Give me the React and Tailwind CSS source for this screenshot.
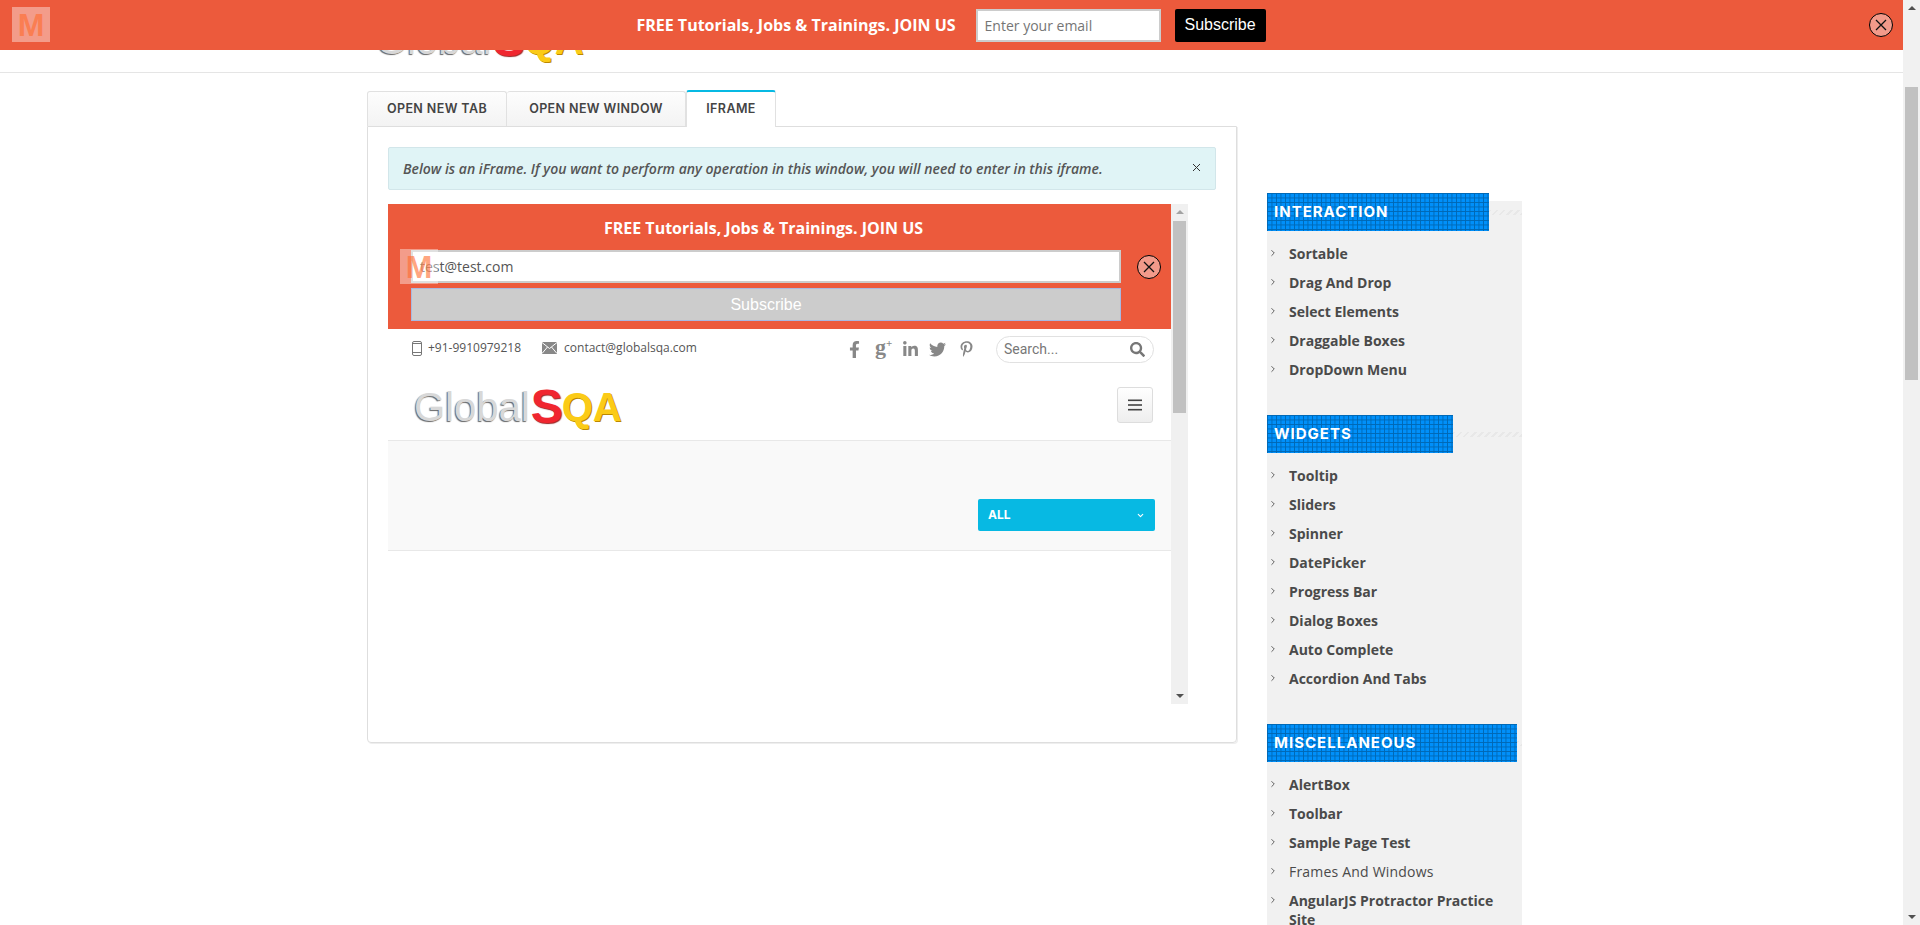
import React from "react";
import { FaFacebookF, FaLinkedinIn, FaTwitter, FaPinterestP, FaSearch } from "react-icons/fa";
import { ChevronRight, ChevronDown } from "lucide-react";

const M = ({ className = "" }) => (
  <div className={`flex items-center justify-center bg-[#ffffff66] w-[38px] h-[35px] text-[#ff6a2c99] font-bold text-[32px] leading-none font-['Liberation_Sans',sans-serif] ${className}`}>M</div>
);

const CloseCircle = ({ className = "" }) => (
  <div className={`w-6 h-6 rounded-full bg-[#f29a8a] border-[1.5px] border-black flex items-center justify-center ${className}`}>
    <svg width="14" height="14" viewBox="0 0 14 14"><path d="M2 2 L12 12 M12 2 L2 12" stroke="#111" strokeWidth="1.3" fill="none" /></svg>
  </div>
);

const Logo = () => (
  <div className="flex items-center h-[37px] font-['Liberation_Sans',sans-serif] leading-none select-none">
    <span className="text-[40px] text-[#d8d8d8] [text-shadow:-1px_1px_1px_#666]">Global</span>
    <span className="text-[48px] font-bold text-[#f0262f] ml-[1px] [text-shadow:1px_1px_1px_#922]">S</span>
    <span className="text-[40px] font-bold text-[#fbcb17] -ml-[1px] [text-shadow:1px_1px_0_#b80]">QA</span>
  </div>
);

const Section = ({ title, width, items, mt }) => (
  <div className={mt}>
    <div className="flex items-center relative">
      <div
        className="h-[38px] flex items-center pl-[7px] text-white font-bold text-[15px] tracking-[1px] font-['Inter',sans-serif] bg-[#0090fa] bg-[linear-gradient(#0068b4_1px,transparent_1px),linear-gradient(90deg,#0068b4_1px,transparent_1px)] bg-[size:4.5px_4.5px]"
        style={{ width }}
      >
        {title}
      </div>
      <div className="flex-1 h-[5px] bg-[repeating-linear-gradient(135deg,#e8e8e8_0_2px,#f1f1f1_2px_5px)]" />
    </div>
    <ul className="mt-[8px] mb-[1px] flex flex-col">
      {items.map((t) => (
        <li key={t} className="flex items-start min-h-[29px] pl-[1px]">
          <ChevronRight className="w-[10px] h-[10px] text-[#444] mt-[9px] shrink-0" strokeWidth={2} />
          <span className={`ml-[11px] py-[5px] text-[14px] leading-[19px] text-[#4a4a4a] font-['Open_Sans',sans-serif] pr-[8px] ${t === "Frames And Windows" ? "font-normal tracking-[0.2px]" : "font-bold"}`}>{t}</span>
        </li>
      ))}
    </ul>
  </div>
);

const tabText = "text-[12.5px] font-semibold tracking-[0.4px] text-[#444] font-['Inter',sans-serif]";

export default function App() {
  return (
    <div className="relative flex h-[925px] w-full overflow-hidden bg-white font-['Open_Sans',sans-serif]">
      <div className="flex-1 min-w-0 relative">
        {/* fixed promo bar */}
        <div className="absolute top-0 left-0 right-0 h-[50px] bg-[#ec5a3c] z-10 flex items-center justify-center">
          <M className="absolute left-[12px] top-[7px]" />
          <div className="flex items-center pr-[1px]">
            <span className="text-white font-bold text-[16px]">FREE Tutorials, Jobs &amp; Trainings. JOIN US</span>
            <div className="ml-[20px] w-[185px] h-[33px] bg-white border-2 border-[#ccc] flex items-center pl-[7px] text-[14px] text-[#757575]">Enter your email</div>
            <div className="ml-[14px] w-[91px] h-[33px] bg-black rounded-[2px] text-white flex items-center justify-center text-[16px] font-['Liberation_Sans',sans-serif]">Subscribe</div>
          </div>
          <CloseCircle className="absolute right-[10px] top-[13px]" />
        </div>

        {/* sticky header remains */}
        <div className="h-[73px] border-b border-[#e5e5e5] overflow-hidden pl-[376px] pt-[21px]">
          <Logo />
        </div>

        <div className="flex pl-[367px] pt-[17px]">
          {/* main column */}
          <div className="w-[870px]">
            <div className={`flex h-[36px] items-end relative z-[1] ${tabText}`}>
              <div className="w-[140px] h-[35px] border border-[#e1e1e1] border-b-0 rounded-t-[3px] bg-[linear-gradient(#fdfdfd,#f3f3f3)] flex items-center justify-center">OPEN NEW TAB</div>
              <div className="w-[179px] h-[35px] border border-l-0 border-[#e1e1e1] border-b-0 rounded-t-[3px] bg-[linear-gradient(#fdfdfd,#f3f3f3)] flex items-center justify-center">OPEN NEW WINDOW</div>
              <div className="w-[90px] h-[37px] -mb-px border-x border-[#e1e1e1] border-t-2 border-t-[#07b9e3] rounded-t-[3px] bg-white flex items-center justify-center">IFRAME</div>
            </div>
            <div className="h-[617px] border border-[#dedede] shadow-[1px_1px_0_#eeeeee] rounded-b-[4px] pl-[20px] pr-[20px] pt-[20px]">
              <div className="h-[43px] bg-[#e0f4f6] border border-[#d2e6ea] rounded-[2px] flex items-center justify-between pl-[14px] pr-[14px] text-[14px] italic font-semibold text-[#555]">
                <span>Below is an iFrame. If you want to perform any operation in this window, you will need to enter in this iframe.</span>
                <svg className="mb-[2px]" width="9" height="9" viewBox="0 0 9 9"><path d="M1 1 L8 8 M8 1 L1 8" stroke="#333" strokeWidth="1" /></svg>
              </div>
              {/* iframe */}
              <div className="mt-[14px] w-[800px] h-[500px] flex overflow-hidden">
                <div className="flex-1 min-w-0 flex flex-col">
                  <div className="h-[125px] bg-[#ec5a3c] relative pt-[12px] shrink-0">
                    <div className="text-center pr-[32px] text-white font-bold text-[16px] leading-[24px]">FREE Tutorials, Jobs &amp; Trainings. JOIN US</div>
                    <div className="ml-[23px] mt-[10px] w-[710px] h-[33px] bg-white border-2 border-[#ccc] flex items-center pl-[7px] text-[14px] text-[#555]">test@test.com</div>
                    <div className="ml-[23px] mt-[5px] w-[710px] h-[33px] bg-[#ccc] border border-[#a9b8e0] flex items-center justify-center text-white text-[16px] font-['Liberation_Sans',sans-serif]">Subscribe</div>
                    <M className="absolute left-[12px] top-[45px]" />
                    <CloseCircle className="absolute left-[749px] top-[51px]" />
                  </div>
                  <div className="h-[47px] shrink-0 flex items-start pl-[24px] pr-[17px] pt-[7px] relative">
                    <div className="flex items-center text-[12px] text-[#555] mt-[3px]">
                      <svg width="10" height="15" viewBox="0 0 10 15" fill="none" stroke="#777" strokeWidth="1">
                        <rect x="0.5" y="0.5" width="9" height="14" rx="1.5" />
                        <path d="M0.5 11.5 H9.5 M0.5 2.5 H9.5" />
                      </svg>
                      <span className="ml-[6px]">+91-9910979218</span>
                      <svg className="ml-[21px]" width="15" height="12" viewBox="0 0 15 12">
                        <rect x="0" y="0" width="15" height="12" fill="#888" />
                        <path d="M0 0.5 L7.5 6.5 L15 0.5 M0 11.5 L5.5 5 M15 11.5 L9.5 5" stroke="#fff" strokeWidth="1" fill="none" />
                      </svg>
                      <span className="ml-[7px]">contact@globalsqa.com</span>
                    </div>
                    <div className="ml-auto flex items-center text-[#888] mt-[4px]">
                      <FaFacebookF className="w-[11px] h-[17px]" />
                      <span className="ml-[15px] w-[15px] h-[18px] relative font-['Liberation_Serif',serif] font-bold text-[22px] leading-[14px] text-left">
                        g<span className="absolute left-[11px] -top-[2px] text-[11px] leading-[11px]">+</span>
                      </span>
                      <FaLinkedinIn className="ml-[12px] w-[17px] h-[17px]" />
                      <FaTwitter className="ml-[10px] w-[17px] h-[17px]" />
                      <FaPinterestP className="ml-[14px] w-[13px] h-[16px]" />
                    </div>
                    <div className="ml-[23px] w-[158px] h-[27px] border border-[#e1e1e1] rounded-full flex items-center justify-between pl-[7px] pr-[8px] text-[14px] text-[#777] font-['Roboto',sans-serif]">
                      <span>Search...</span>
                      <FaSearch className="w-[15px] h-[15px] text-[#777]" />
                    </div>
                  </div>
                  <div className="h-[65px] shrink-0 border-b border-[#e8e8e8] flex items-start pl-[26px] pr-[18px] relative">
                    <div className="mt-[12px]"><Logo /></div>
                    <div className="ml-auto mt-[11px] w-[36px] h-[36px] border border-[#ddd] rounded-[3px] bg-[linear-gradient(#fff,#eee)] flex items-center justify-center">
                      <svg width="14" height="12" viewBox="0 0 14 12" fill="#444">
                        <rect y="0.5" width="14" height="1.6" />
                        <rect y="5.2" width="14" height="1.6" />
                        <rect y="9.9" width="14" height="1.6" />
                      </svg>
                    </div>
                  </div>
                  <div className="h-[110px] shrink-0 bg-[#f9f9f9] border-b border-[#e8e8e8] flex items-start justify-end pr-[16px] pt-[58px]">
                    <div className="w-[177px] h-[32px] rounded-[2px] bg-[#07b9e3] flex items-center justify-between pl-[10px] pr-[10px] text-white font-bold text-[12px] font-['Inter',sans-serif]">
                      <span>ALL</span>
                      <ChevronDown className="w-[9px] h-[9px]" strokeWidth={3} />
                    </div>
                  </div>
                </div>
                {/* iframe scrollbar */}
                <div className="w-[17px] bg-[#f0f0f0] flex flex-col items-center shrink-0 pt-[6px] pb-[6px]">
                  <div className="w-0 h-0 border-x-[4px] border-x-transparent border-b-[4px] border-b-[#a3a3a3]" />
                  <div className="mt-[7px] w-[13px] h-[192px] bg-[#c1c1c1]" />
                  <div className="mt-auto w-0 h-0 border-x-[4px] border-x-transparent border-t-[4px] border-t-[#505050]" />
                </div>
              </div>
            </div>
          </div>

          {/* sidebar */}
          <div className="ml-[30px] w-[255px] mt-[111px] h-[900px] bg-[#f1f1f1]">
            <div className="-mt-[8px]">
              <Section title="INTERACTION" width={222} items={["Sortable", "Drag And Drop", "Select Elements", "Draggable Boxes", "DropDown Menu"]} />
              <Section mt="mt-[31px]" title="WIDGETS" width={186} items={["Tooltip", "Sliders", "Spinner", "DatePicker", "Progress Bar", "Dialog Boxes", "Auto Complete", "Accordion And Tabs"]} />
              <Section mt="mt-[31px]" title="MISCELLANEOUS" width={250} items={["AlertBox", "Toolbar", "Sample Page Test", "Frames And Windows", "AngularJS Protractor Practice Site"]} />
            </div>
          </div>
        </div>
      </div>

      {/* window scrollbar */}
      <div className="w-[17px] bg-[#f1f1f1] shrink-0 flex flex-col items-center pt-[6px] pb-[6px]">
        <div className="w-0 h-0 border-x-[4px] border-x-transparent border-b-[4px] border-b-[#505050]" />
        <div className="mt-[77px] w-[13px] h-[293px] bg-[#c1c1c1]" />
        <div className="mt-auto w-0 h-0 border-x-[4px] border-x-transparent border-t-[4px] border-t-[#505050]" />
      </div>
    </div>
  );
}
